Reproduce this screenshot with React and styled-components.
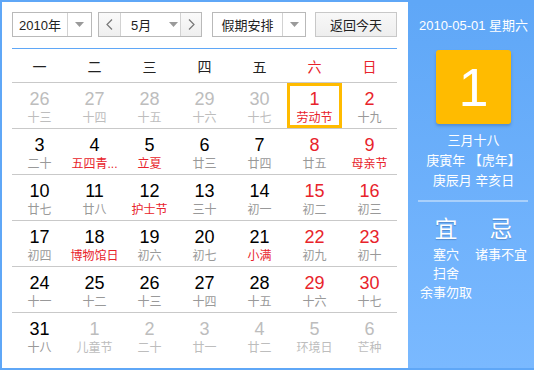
import React from "react";
import styled, { createGlobalStyle } from "styled-components";

const Global = createGlobalStyle`
  html, body { margin: 0; padding: 0; background: #fff; }
  body { font-family: "Liberation Sans", "Noto Sans CJK SC", Arial, sans-serif; }
  * { box-sizing: border-box; }
`;

const CJK = `"Liberation Sans", "Noto Sans CJK SC", sans-serif`;
const RED = "#e8232b";

const Frame = styled.div`
  width: 534px;
  height: 370px;
  border: 2px solid #5fa7f7;
  border-right: none;
  display: flex;
  background: #fff;
`;

const Main = styled.div`
  width: 406px;
  padding: 10px 9px 0 10px;
  display: flex;
  flex-direction: column;
`;

const Toolbar = styled.div`
  display: flex;
  align-items: center;
  height: 25px;
  margin-bottom: 11px;
`;

const Select = styled.div`
  display: flex;
  height: 25px;
  border: 1px solid #b9b9b9;
  background: #fff;
  margin-right: ${(p) => p.$mr || 0}px;
  font-family: ${CJK};
  font-size: 13px;
  color: #222;
`;

const SelText = styled.div`
  width: ${(p) => p.$w}px;
  display: flex;
  align-items: center;
  justify-content: ${(p) => (p.$left ? "flex-start" : "center")};
  padding-left: ${(p) => p.$pl || 0}px;
  border-right: ${(p) => (p.$divider ? "1px solid #d2d2d2" : "none")};
`;

const ArrowPart = styled.div`
  width: ${(p) => p.$w}px;
  display: flex;
  align-items: center;
  justify-content: ${(p) => (p.$start ? "flex-start" : "center")};
  background: #fff;
`;

const NavBtn = styled.div`
  width: ${(p) => p.$w}px;
  display: flex;
  align-items: center;
  justify-content: center;
  background: linear-gradient(#fafafa, #efefef);
  border-left: ${(p) => (p.$bl ? "1px solid #d2d2d2" : "none")};
  border-right: ${(p) => (p.$br ? "1px solid #d2d2d2" : "none")};
`;

const TodayBtn = styled.div`
  width: 82px;
  height: 25px;
  margin-left: 9px;
  border: 1px solid #c8c8c8;
  background: linear-gradient(#f8f8f8, #eeeeee);
  display: flex;
  align-items: center;
  justify-content: center;
  font-family: ${CJK};
  font-size: 13px;
  color: #222;
`;

const Tri = () => (
  <svg width="9" height="5" viewBox="0 0 9 5">
    <path d="M0 0 H9 L4.5 5 Z" fill="#9a9a9a" />
  </svg>
);

const Chevron = ({ dir }) => (
  <svg width="7" height="11" viewBox="0 0 7 11">
    <path
      d={dir === "left" ? "M6 0.5 L1 5.5 L6 10.5" : "M1 0.5 L6 5.5 L1 10.5"}
      fill="none"
      stroke="#777"
      strokeWidth="1.2"
    />
  </svg>
);

const Table = styled.div`
  width: 385px;
  border-top: 1px solid #5fa7f7;
`;

const Week = styled.div`
  display: grid;
  grid-template-columns: repeat(7, 55px);
  height: 34px;
  border-bottom: 1px solid #c9c9c9;
`;

const WeekDay = styled.div`
  display: flex;
  align-items: center;
  justify-content: center;
  font-family: ${CJK};
  font-size: 14px;
  color: ${(p) => (p.$red ? RED : "#222")};
`;

const Row = styled.div`
  display: grid;
  grid-template-columns: repeat(7, 55px);
  height: 46px;
  border-bottom: ${(p) => (p.$last ? "none" : "1px solid #c9c9c9")};
`;

const Cell = styled.div`
  display: flex;
  flex-direction: column;
  align-items: center;
  padding-top: ${(p) => (p.$sel ? 3 : 6)}px;
  height: 45px;
  border: ${(p) => (p.$sel ? "3px solid #ffbb00" : "none")};
`;

const Num = styled.div`
  font-family: "Liberation Sans", Arial, sans-serif;
  font-size: 18px;
  line-height: 20px;
  color: ${(p) => p.$c};
`;

const Lunar = styled.div`
  font-family: ${CJK};
  font-size: 12px;
  line-height: 16px;
  margin-top: 1px;
  color: ${(p) => p.$c};
  white-space: nowrap;
`;

const Side = styled.div`
  flex: 1;
  background: linear-gradient(#5fa7f7, #7ab9ff);
  display: flex;
  flex-direction: column;
  align-items: center;
  padding-left: 5px;
  color: #fff;
  font-family: ${CJK};
`;

const DateLine = styled.div`
  font-size: 13px;
  line-height: 16px;
  margin-top: 16px;
`;

const BigDay = styled.div`
  width: 75px;
  height: 74px;
  margin-top: 16px;
  background: #ffbb00;
  border-radius: 3px;
  box-shadow: 0 2px 3px rgba(40, 80, 140, 0.35);
  display: flex;
  align-items: center;
  justify-content: center;
  font-family: "Liberation Sans", Arial, sans-serif;
  font-size: 54px;
  color: #fff;
`;

const Info = styled.div`
  margin-top: 7px;
  font-size: 13px;
  line-height: 20px;
  text-align: center;
`;

const Divider = styled.div`
  width: 110px;
  height: 2px;
  background: #a9d0fb;
  margin-top: 9px;
  margin-right: 2px;
`;

const YiJi = styled.div`
  display: flex;
  margin-top: 12px;
`;

const Col = styled.div`
  width: 55px;
  display: flex;
  flex-direction: column;
  align-items: center;
`;

const Big = styled.div`
  font-size: 23px;
  line-height: 30px;
  text-shadow: 0 1px 1px rgba(40, 80, 140, 0.4);
  margin-bottom: 1px;
`;

const Item = styled.div`
  font-size: 13px;
  line-height: 19px;
  white-space: nowrap;
`;

const GREY_N = "#bdbdbd";
const GREY_L = "#bdbdbd";
const LUN = "#999";

// [num, lunar, numRed, lunarRed, other, selected]
const rows = [
  [["26", "十三", 0, 0, 1], ["27", "十四", 0, 0, 1], ["28", "十五", 0, 0, 1], ["29", "十六", 0, 0, 1], ["30", "十七", 0, 0, 1], ["1", "劳动节", 1, 1, 0, 1], ["2", "十九", 1, 0, 0]],
  [["3", "二十", 0, 0, 0], ["4", "五四青...", 0, 1, 0], ["5", "立夏", 0, 1, 0], ["6", "廿三", 0, 0, 0], ["7", "廿四", 0, 0, 0], ["8", "廿五", 1, 0, 0], ["9", "母亲节", 1, 1, 0]],
  [["10", "廿七", 0, 0, 0], ["11", "廿八", 0, 0, 0], ["12", "护士节", 0, 1, 0], ["13", "三十", 0, 0, 0], ["14", "初一", 0, 0, 0], ["15", "初二", 1, 0, 0], ["16", "初三", 1, 0, 0]],
  [["17", "初四", 0, 0, 0], ["18", "博物馆日", 0, 1, 0], ["19", "初六", 0, 0, 0], ["20", "初七", 0, 0, 0], ["21", "小满", 0, 1, 0], ["22", "初九", 1, 0, 0], ["23", "初十", 1, 0, 0]],
  [["24", "十一", 0, 0, 0], ["25", "十二", 0, 0, 0], ["26", "十三", 0, 0, 0], ["27", "十四", 0, 0, 0], ["28", "十五", 0, 0, 0], ["29", "十六", 1, 0, 0], ["30", "十七", 1, 0, 0]],
  [["31", "十八", 0, 0, 0], ["1", "儿童节", 0, 0, 1], ["2", "二十", 0, 0, 1], ["3", "廿一", 0, 0, 1], ["4", "廿二", 0, 0, 1], ["5", "环境日", 0, 0, 1], ["6", "芒种", 0, 0, 1]],
];

const weekdays = ["一", "二", "三", "四", "五", "六", "日"];

export default function App() {
  return (
    <>
      <Global />
      <Frame>
        <Main>
          <Toolbar>
            <Select $mr={6}>
              <SelText $w={55} $divider>2010年</SelText>
              <ArrowPart $w={23}><Tri /></ArrowPart>
            </Select>
            <Select $mr={10}>
              <NavBtn $w={22} $br><Chevron dir="left" /></NavBtn>
              <SelText $w={48} $left $pl={10}>5月</SelText>
              <ArrowPart $w={11} $start><Tri /></ArrowPart>
              <NavBtn $w={21} $bl><Chevron dir="right" /></NavBtn>
            </Select>
            <Select>
              <SelText $w={70} $divider>假期安排</SelText>
              <ArrowPart $w={22}><Tri /></ArrowPart>
            </Select>
            <TodayBtn>返回今天</TodayBtn>
          </Toolbar>
          <Table>
            <Week>
              {weekdays.map((w, i) => (
                <WeekDay key={w} $red={i >= 5}>{w}</WeekDay>
              ))}
            </Week>
            {rows.map((r, ri) => (
              <Row key={ri} $last={ri === rows.length - 1}>
                {r.map(([n, l, nr, lr, other, sel], ci) => (
                  <Cell key={ci} $sel={!!sel}>
                    <Num $c={other ? GREY_N : nr ? RED : "#000"}>{n}</Num>
                    <Lunar $c={other ? GREY_L : lr ? RED : LUN}>{l}</Lunar>
                  </Cell>
                ))}
              </Row>
            ))}
          </Table>
        </Main>
        <Side>
          <DateLine>2010-05-01 星期六</DateLine>
          <BigDay>1</BigDay>
          <Info>
            <div>三月十八</div>
            <div>庚寅年 【虎年】</div>
            <div>庚辰月 辛亥日</div>
          </Info>
          <Divider />
          <YiJi>
            <Col>
              <Big>宜</Big>
              <Item>塞穴</Item>
              <Item>扫舍</Item>
              <Item>余事勿取</Item>
            </Col>
            <Col>
              <Big>忌</Big>
              <Item>诸事不宜</Item>
            </Col>
          </YiJi>
        </Side>
      </Frame>
    </>
  );
}
